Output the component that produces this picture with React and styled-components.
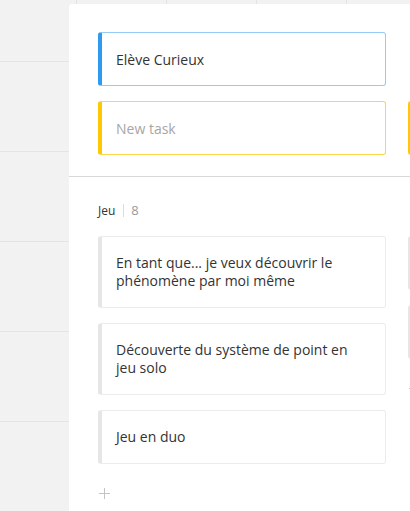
import React from "react";
import styled, { createGlobalStyle } from "styled-components";

const GlobalStyle = createGlobalStyle`
  html, body {
    margin: 0;
    padding: 0;
    height: 100%;
    overflow: hidden;
  }
  body {
    font-family: "Open Sans", "Liberation Sans", sans-serif;
    background-color: #f2f2f2;
    background-image:
      linear-gradient(to right, #e4e4e4 1px, transparent 1px),
      linear-gradient(to bottom, #e4e4e4 1px, transparent 1px);
    background-size: 90px 90px, 90px 90px;
    background-position: 76px 0, 0 61px;
  }
`;

const Panel = styled.div`
  margin: 4px 0 0 69px;
  height: 507px;
  background: white;
  border-top-left-radius: 3px;
  overflow: hidden;
`;

const TopSection = styled.div`
  display: flex;
  gap: 22px;
  padding: 28px 0 21px 29px;
  border-bottom: 1px solid #d9d9d9;
`;

const Column = styled.div`
  display: flex;
  flex-direction: column;
  gap: 15px;
  width: 288px;
  flex-shrink: 0;
`;

const Spacer = styled.div`
  height: 54px;
`;

const StoryCard = styled.div`
  box-sizing: border-box;
  height: 54px;
  display: flex;
  align-items: center;
  padding: 0 14px;
  border: 1px solid ${(p) => p.$border};
  border-left: 4px solid ${(p) => p.$accent};
  border-radius: 3px;
  font-size: 14px;
  color: ${(p) => (p.$placeholder ? "#a6a6a6" : "#333")};
`;

const LaneSection = styled.div`
  display: flex;
  gap: 22px;
  padding: 24px 0 0 29px;
`;

const Lane = styled.div`
  width: 288px;
  flex-shrink: 0;
  display: flex;
  flex-direction: column;
`;

const LaneHeader = styled.div`
  display: flex;
  align-items: center;
  height: 18px;
  margin-bottom: 17px;
  font-size: 12px;
  color: #333;
`;

const Count = styled.span`
  font-size: 13px;
  color: #9a9a9a;
  border-left: 1px solid #dcdcdc;
  margin-left: 8px;
  padding-left: 7px;
  line-height: 13px;
`;

const TaskList = styled.div`
  display: flex;
  flex-direction: column;
  gap: 15px;
`;

const TaskCard = styled.div`
  box-sizing: border-box;
  min-height: 54px;
  padding: 17px 14px 17px;
  border: 1px solid #ececec;
  border-left: 4px solid #e6e6e6;
  border-radius: 3px;
  font-size: 14px;
  line-height: 18px;
  color: #333;
`;

const AddButton = styled.div`
  margin-top: 24px;
  margin-left: 1px;
  width: 11px;
  height: 11px;
  display: flex;
`;

const Plus = () => (
  <AddButton>
    <svg width="11" height="11" viewBox="0 0 11 11">
      <path d="M5.5 0V11M0 5.5H11" stroke="#c4c4c4" strokeWidth="1" fill="none" />
    </svg>
  </AddButton>
);

const lanes = [
  {
    title: "Jeu",
    count: 8,
    tasks: [
      "En tant que... je veux découvrir le phénomène par moi même",
      "Découverte du système de point en jeu solo",
      "Jeu en duo",
    ],
  },
  {
    title: "",
    count: null,
    tasks: ["", ""],
  },
];

export default function App() {
  return (
    <>
      <GlobalStyle />
      <Panel>
        <TopSection>
          <Column>
            <StoryCard $border="#94cbf7" $accent="#2e9bf0">Elève Curieux</StoryCard>
            <StoryCard $border="#fcd64a" $accent="#ffc800" $placeholder>New task</StoryCard>
          </Column>
          <Column>
            <Spacer />
            <StoryCard $border="#fcd64a" $accent="#ffc800" $placeholder />
          </Column>
        </TopSection>
        <LaneSection>
          {lanes.map((lane, i) => (
            <Lane key={i}>
              <LaneHeader>
                {lane.title}
                {lane.count !== null && <Count>{lane.count}</Count>}
              </LaneHeader>
              <TaskList>
                {lane.tasks.map((t, j) => (
                  <TaskCard key={j}>{t}</TaskCard>
                ))}
              </TaskList>
              <Plus />
            </Lane>
          ))}
        </LaneSection>
      </Panel>
    </>
  );
}
